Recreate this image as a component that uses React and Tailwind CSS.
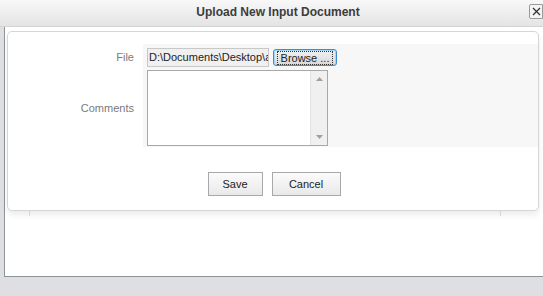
export default function App() {
  return (
    <div
      className="w-[543px] h-[296px] bg-[#dfdee3] overflow-hidden relative"
      style={{ fontFamily: '"Liberation Sans", Arial, sans-serif' }}
    >
      {/* Title bar */}
      <div className="h-[27px] bg-gradient-to-b from-[#f8f8f8] to-[#e4e4e4] border-b border-[#d4d4d4] flex items-center justify-center relative">
        <span className="text-[12px] font-bold text-[#3c3c3c] -mt-[2px] ml-[13px]">Upload New Input Document</span>
        <div className="absolute right-0 top-[4px] w-[14px] h-[15px] border border-[#9a9a9a] rounded-l-[2px] bg-[#f4f4f4] flex items-center justify-center">
          <svg width="9" height="9" viewBox="0 0 9 9">
            <path d="M1 1L8 8M8 1L1 8" stroke="#333" strokeWidth="1.3" />
          </svg>
        </div>
      </div>

      {/* Window body */}
      <div className="ml-[4px] h-[250px] bg-white border-l border-b border-[#8e9599] pt-[4px] pl-[2px] relative">
        {/* ghost lines under card */}
        <div className="absolute left-[24px] top-[183px] w-px h-[6px] bg-[#e2e2e2]" />
        <div className="absolute left-[495px] top-[183px] w-px h-[6px] bg-[#e2e2e2]" />

        {/* Card */}
        <div className="relative w-[532px] h-[180px] bg-white border border-[#d6d6d6] rounded-[5px] shadow-[0_4px_6px_rgba(0,0,0,0.08)] pt-[12px]">
          <div className="flex">
            {/* labels */}
            <div className="w-[126px] flex flex-col items-end text-[11px] text-[#7a7a7a]">
              <div className="h-[18px] mt-[4px] leading-[18px]">File</div>
              <div className="mt-[33px] leading-[18px]">Comments</div>
            </div>
            {/* gray panel */}
            <div className="ml-[9px] w-[395px] h-[103px] bg-[#f7f7f7] pt-[4px] pl-[4px]">
              <div className="flex items-center">
                <div className="w-[122px] h-[19px] border border-[#c8c8c8] bg-[#f0f0f0] text-[11px] text-[#222] leading-[17px] pl-[1px] overflow-hidden whitespace-nowrap">
                  D:\Documents\Desktop\a
                </div>
                <div className="ml-[4px] w-[64px] h-[17px] border border-[#3c8fcf] rounded-[3px] bg-gradient-to-b from-[#f2f2f2] to-[#d8d8d8] shadow-[inset_0_0_0_1px_#a6d7f7] flex items-center justify-center">
                  <span className="text-[11px] text-[#222] leading-[12px] px-[3px] border border-dotted border-[#333]">Browse ...</span>
                </div>
              </div>
              <div className="mt-[3px] w-[181px] h-[76px] border border-[#a8a8a8] bg-white flex justify-end">
                <div className="w-[17px] h-full bg-[#f0f0f0] border-l border-[#e4e4e4] flex flex-col items-center justify-between py-[6px]">
                  <svg width="7" height="4" viewBox="0 0 7 4"><path d="M0 4L3.5 0L7 4Z" fill="#a0a0a0" /></svg>
                  <svg width="7" height="4" viewBox="0 0 7 4"><path d="M0 0L3.5 4L7 0Z" fill="#a0a0a0" /></svg>
                </div>
              </div>
            </div>
          </div>

          {/* Buttons */}
          <div className="flex justify-center gap-[9px] mt-[25px] pl-[2px]">
            <button className="w-[55px] h-[24px] border border-[#a8a8a8] bg-gradient-to-b from-[#fbfbfb] to-[#e9e9e9] text-[11px] text-[#222]">Save</button>
            <button className="w-[69px] h-[24px] border border-[#a8a8a8] bg-gradient-to-b from-[#fbfbfb] to-[#e9e9e9] text-[11px] text-[#222]">Cancel</button>
          </div>
        </div>
      </div>
    </div>
  );
}
